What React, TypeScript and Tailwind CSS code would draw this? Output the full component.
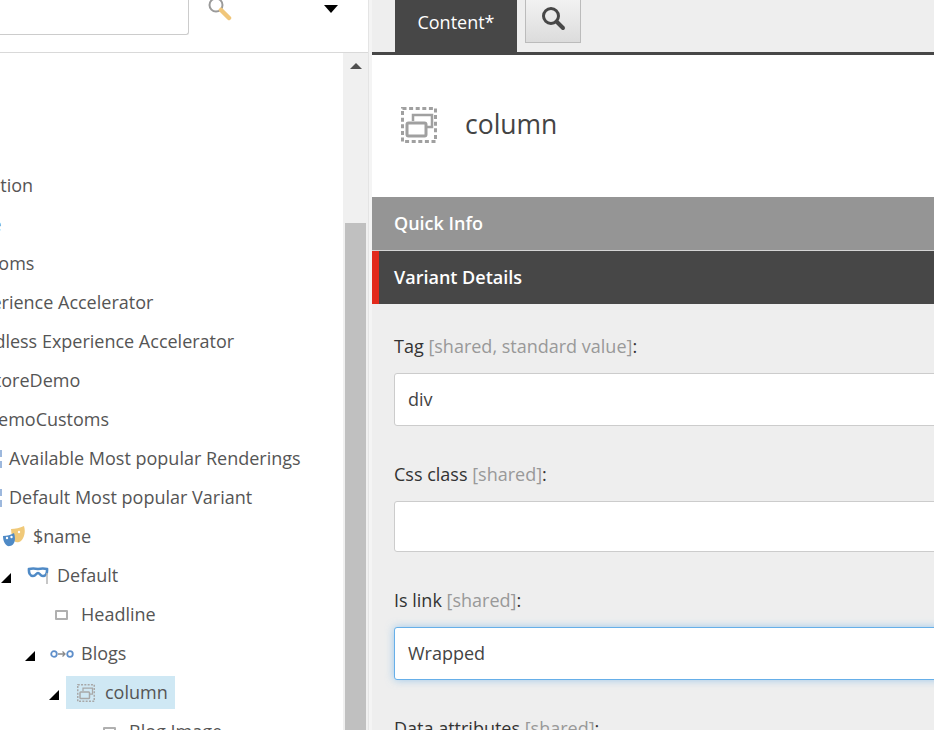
import type { ReactNode } from 'react';

const FONT = 'font-["Open_Sans",sans-serif]';

interface TreeRow {
    text: string;
    /** tree depth, each level is 24px, level 0 starts text at x=9 */
    depth: number;
    expanded?: boolean;
    icon?: ReactNode;
    selected?: boolean;
}

function SearchGlass() {
    return (
        <svg width="25" height="24" viewBox="0 0 25 24" className="block">
            <circle cx="9" cy="7" r="6.5" fill="#fff" stroke="#9a9a9a" strokeWidth="2" />
            <path d="M14 12l8 8" stroke="#f0c67a" strokeWidth="4.5" strokeLinecap="round" />
        </svg>
    );
}

function ColumnIcon({ size, color }: { size: number; color: string }) {
    return (
        <svg width={size} height={size} viewBox="0 0 36 36" fill="none" className="block">
            <rect x="1.5" y="1.5" width="33" height="33" stroke={color} strokeWidth="3" strokeDasharray="4 2.6" />
            <path d="M12 14V8h19v12h-5" stroke={color} strokeWidth="2.5" />
            <rect x="6" y="16" width="19" height="13" rx="1.5" stroke={color} strokeWidth="3" />
        </svg>
    );
}

function RectIcon() {
    return <div className="h-[10px] w-[13px] rounded-[1px] border-2 border-[#b0b0b0] bg-white" />;
}

function BlueDots() {
    return (
        <svg width="27" height="24" viewBox="0 0 27 24" className="block">
            <rect x="24" y="3" width="2" height="7" fill="#9db8dd" />
            <rect x="24" y="14" width="2" height="7" fill="#9db8dd" />
        </svg>
    );
}

function MasksIcon() {
    return (
        <svg width="23" height="21" viewBox="0 0 23 21" className="block">
            <path d="M9 3c4 0 9-1 13-3 2 6 0 14-5 16-3 1-6-1-7-4z" fill="#f0c979" />
            <path d="M1 10c4 0 8-1 11-3 2 6 1 12-4 13-4 1-7-4-7-10z" fill="#4f8ac6" />
            <circle cx="5" cy="12" r="1.2" fill="#fff" />
            <circle cx="9.500" cy="11" r="1.2" fill="#fff" />
            <circle cx="17" cy="6" r="1.2" fill="#fff" />
        </svg>
    );
}

function MaskIcon() {
    return (
        <svg width="22" height="17" viewBox="0 0 22 17" fill="none" className="block">
            <path
                d="M2 2c3-.8 6-.6 9 0 3-.6 6-.8 9 0 .4 4-1 7-4 7-3 0-3-3-5-3s-2 3-5 3c-3 0-4.400-3-4-7z"
                stroke="#4f8ac6"
                strokeWidth="2.600"
            />
            <path d="M20 6v11" stroke="#b5b5b5" strokeWidth="1.500" />
        </svg>
    );
}

function LinkIcon() {
    return (
        <svg width="24" height="10" viewBox="0 0 24 10" fill="none" className="block">
            <circle cx="4" cy="5" r="2.800" stroke="#5f8fca" strokeWidth="1.800" />
            <circle cx="20" cy="5" r="2.800" stroke="#5f8fca" strokeWidth="1.800" />
            <path d="M8 5h7M12.500 2.500L15 5l-2.500 2.500" stroke="#8a8a8a" strokeWidth="1.300" />
        </svg>
    );
}

const rows: TreeRow[] = [
    { text: 'Foundation', depth: -3 },
    { text: 'Feature', depth: -3 },
    { text: 'Customs', depth: -2 },
    { text: 'Experience Accelerator', depth: -2 },
    { text: 'Headless Experience Accelerator', depth: -2 },
    { text: 'StoreDemo', depth: -1 },
    { text: 'DemoCustoms', depth: -1 },
    { text: 'Available Most popular Renderings', depth: 0, icon: <BlueDots /> },
    { text: 'Default Most popular Variant', depth: 0, icon: <BlueDots /> },
    { text: '$name', depth: 1, icon: <MasksIcon /> },
    { text: 'Default', depth: 2, expanded: true, icon: <MaskIcon /> },
    { text: 'Headline', depth: 3, icon: <RectIcon /> },
    { text: 'Blogs', depth: 3, expanded: true, icon: <LinkIcon /> },
    { text: 'column', depth: 4, expanded: true, selected: true, icon: <ColumnIcon size={18} color="#a8a8a8" /> },
    { text: 'Blog Image', depth: 5, icon: <RectIcon /> },
];

function Row({ row }: { row: TreeRow }) {
    const textLeft = 9 + row.depth * 24;
    return (
        <div className="relative h-[39px]">
            {row.expanded && (
                <div
                    className="absolute top-[15px] h-0 w-0 border-b-[10px] border-l-[10px] border-b-black border-l-transparent"
                    style={{ left: textLeft - 56 }}
                />
            )}
            <div
                className={`absolute top-[1px] flex h-[33px] items-center whitespace-nowrap pr-[7px] ${
                    row.selected ? 'bg-[#cfe8f4]' : ''
                }`}
                style={{ left: textLeft - 39 }}
            >
                <div className="flex w-[39px] items-center justify-center">{row.icon}</div>
                <span className="text-[18px] leading-[33px] text-[#555]">{row.text}</span>
            </div>
        </div>
    );
}

function Field({
    label,
    hint,
    value,
    focused,
    height,
}: {
    label: string;
    hint: string;
    value: string;
    focused?: boolean;
    height: string;
}) {
    return (
        <div>
            <div className="h-[27px] whitespace-nowrap text-[18px] leading-[27px] text-[#333]">
                {label} <span className="text-[#999]">{hint}</span>:
            </div>
            <div
                className={`mt-[13px] flex w-[620px] items-center rounded-[3px] border bg-white pl-[13px] text-[18px] text-[#444] ${height} ${
                    focused
                        ? 'border-[#66afe9] shadow-[0_0_8px_rgba(102,175,233,0.6)]'
                        : 'border-[#ccc]'
                }`}
            >
                {value}
            </div>
        </div>
    );
}

export default function App() {
    return (
        <div className={`flex h-[730px] w-[934px] overflow-hidden bg-white ${FONT}`}>
            {/* Content tree */}
            <div className="flex w-[368px] shrink-0 flex-col">
                <div className="relative h-[53px] shrink-0 border-b border-[#d9d9d9]">
                    <div className="h-[35px] w-[189px] rounded-br-[3px] border-r border-b border-[#ccc]" />
                    <div className="absolute top-[-2px] left-[207px]">
                        <SearchGlass />
                    </div>
                    <div className="absolute top-[5px] left-[324px] h-0 w-0 border-x-[7px] border-t-[8px] border-x-transparent border-t-black" />
                </div>
                <div className="flex min-h-0 flex-1">
                    <div className="min-w-0 flex-1 overflow-hidden pt-[115px]">
                        {rows.map((row) => (
                            <Row key={row.text} row={row} />
                        ))}
                    </div>
                    <div className="flex w-[25px] shrink-0 flex-col items-center bg-[#f0f0f0]">
                        <div className="mt-[10px] h-0 w-0 border-x-[6px] border-b-[6px] border-x-transparent border-b-[#505050]" />
                        <div className="mt-[154px] w-[21px] flex-1 bg-[#c0c0c0]" />
                    </div>
                </div>
            </div>

            {/* Splitter */}
            <div className="w-[4px] shrink-0 border-l border-[#e4e4e4] bg-[#f4f4f4]" />

            {/* Editor */}
            <div className="flex min-w-0 flex-1 flex-col">
                <div className="flex h-[55px] shrink-0 items-start border-b-[3px] border-[#474747] bg-[#eeeeee] pl-[23px]">
                    <div className="flex h-[52px] w-[122px] items-center justify-center bg-[#474747] pb-[8px] text-[18px] text-white">
                        Content*
                    </div>
                    <div className="ml-[8px] -mt-px flex h-[44px] w-[56px] items-center justify-center border border-[#bbb] bg-linear-to-b from-[#f2f2f2] to-[#dcdcdc] pb-[4px]">
                        <svg width="26" height="26" viewBox="0 0 26 26" fill="none">
                            <circle cx="11" cy="10" r="7.500" stroke="#474747" strokeWidth="3" />
                            <path d="M16.500 15.500L23 22" stroke="#474747" strokeWidth="4" strokeLinecap="round" />
                        </svg>
                    </div>
                </div>

                <div className="flex h-[142px] shrink-0 items-center gap-[28px] bg-white pb-[2px] pl-[29px]">
                    <ColumnIcon size={36} color="#a0a0a0" />
                    <span className="text-[26.500px] text-[#444]">column</span>
                </div>

                <div className="flex h-[54px] shrink-0 items-center border-b border-[#d4d4d4] bg-[#959595] pb-[1px] pl-[22px] text-[18px] font-semibold text-white">
                    Quick Info
                </div>
                <div className="flex h-[53px] shrink-0 items-center border-l-[7px] border-[#e22a1c] bg-[#474747] pb-[1px] pl-[15px] text-[18px] font-semibold text-white">
                    Variant Details
                </div>

                <div className="flex flex-1 flex-col gap-[35px] overflow-hidden bg-[#eeeeee] pt-[29px] pl-[22px]">
                    <Field label="Tag" hint="[shared, standard value]" value="div" height="h-[53px]" />
                    <Field label="Css class" hint="[shared]" value="" height="h-[51px]" />
                    <Field label="Is link" hint="[shared]" value="Wrapped" focused height="h-[53px]" />
                    <Field label="Data attributes" hint="[shared]" value="" height="h-[53px]" />
                </div>
            </div>
        </div>
    );
}
